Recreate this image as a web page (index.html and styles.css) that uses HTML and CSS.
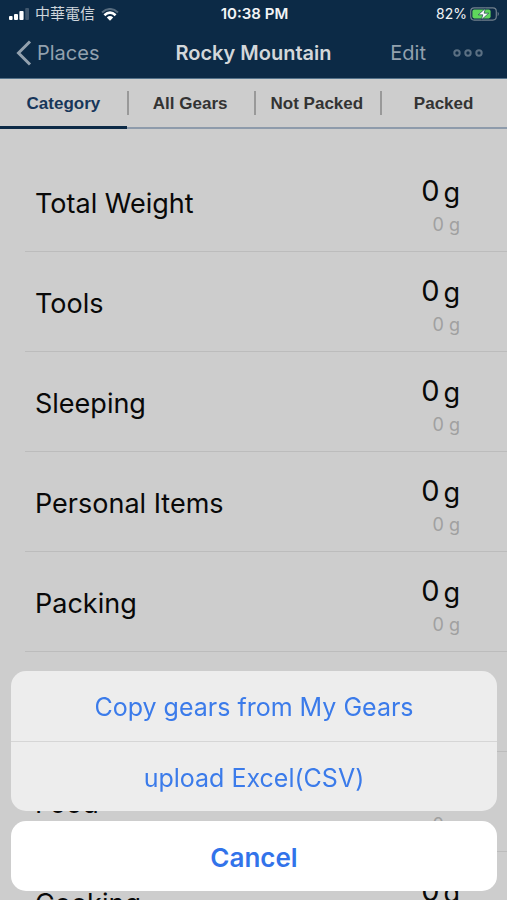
FILE: index.html
```html
<!DOCTYPE html>
<html lang="en">
<head>
<meta charset="utf-8">
<meta name="viewport" content="width=device-width, initial-scale=1">
<title>Rocky Mountain</title>
<link rel="stylesheet" href="styles.css">
</head>
<body>
<div class="app">
  <header class="header">
    <div class="status">
      <div class="status-side">
        <svg class="signal" viewBox="0 0 20 12" aria-hidden="true"><rect x="0" y="8" width="3.6" height="4" rx="1"/><rect x="5" y="6" width="4" height="6" rx="1"/><rect x="10.4" y="3" width="4.2" height="9" rx="1"/><rect x="16.2" y="0" width="3.8" height="12" rx="1" opacity=".22"/></svg>
        <span class="carrier">中華電信</span>
        <svg class="wifi" viewBox="0 0 18 13" aria-hidden="true"><path d="M1 4.5Q9-2.5 17 4.5" opacity=".3"/><path d="M3.4 7.2Q9 2 14.6 7.2" stroke-width="2.6"/><path class="solid" d="M5.8 9.4Q9 6.8 12.2 9.4L9 12.8z"/></svg>
      </div>
      <span class="clock">10:38 PM</span>
      <div class="status-side status-end">
        <span class="percent">82%</span>
        <svg class="battery" viewBox="0 0 30 14" aria-hidden="true"><rect x=".7" y=".9" width="25.6" height="12.2" rx="3.5" fill="none" stroke="#71808d" stroke-width="1.2"/><path d="M27.7 4.8q2.4 2.2 0 4.4z" fill="#71808d"/><rect x="2.4" y="2.6" width="18.2" height="8.8" rx="1.8" fill="#5fd65c"/><path d="M15.4 1.4 8.3 7.8h4.5L11.4 12.8l7.3-6.6h-4.6z" fill="#fff" stroke="#0c2a46" stroke-width=".6"/></svg>
      </div>
    </div>
    <nav class="nav">
      <a class="back" href="#places"><svg class="chevron" viewBox="0 0 16 26" aria-hidden="true"><path d="M14 1.5 2.5 13 14 24.5"/></svg>Places</a>
      <h1 class="title">Rocky Mountain</h1>
      <div class="actions">
        <button class="edit" type="button">Edit</button>
        <button class="more" type="button" aria-label="More"><svg viewBox="0 0 30 8" aria-hidden="true"><circle cx="4" cy="4" r="2.7"/><circle cx="15" cy="4" r="2.7"/><circle cx="26" cy="4" r="2.7"/></svg></button>
      </div>
    </nav>
  </header>
  <div class="tabs">
    <button class="tab active" type="button">Category</button>
    <button class="tab" type="button">All Gears</button>
    <button class="tab" type="button">Not Packed</button>
    <button class="tab" type="button">Packed</button>
  </div>
  <ul class="list">
    <li class="row"><span class="name">Total Weight</span><div class="weights"><div class="main"><span>0</span><span class="unit">g</span></div><div class="sub">0 g</div></div></li>
    <li class="row"><span class="name">Tools</span><div class="weights"><div class="main"><span>0</span><span class="unit">g</span></div><div class="sub">0 g</div></div></li>
    <li class="row"><span class="name">Sleeping</span><div class="weights"><div class="main"><span>0</span><span class="unit">g</span></div><div class="sub">0 g</div></div></li>
    <li class="row"><span class="name">Personal Items</span><div class="weights"><div class="main"><span>0</span><span class="unit">g</span></div><div class="sub">0 g</div></div></li>
    <li class="row"><span class="name">Packing</span><div class="weights"><div class="main"><span>0</span><span class="unit">g</span></div><div class="sub">0 g</div></div></li>
    <li class="row"></li>
    <li class="row"><span class="name">Food</span><div class="weights"><div class="main"><span>0</span><span class="unit">g</span></div><div class="sub">0 g</div></div></li>
    <li class="row"><span class="name">Cooking</span><div class="weights"><div class="main"><span>0</span><span class="unit">g</span></div></div></li>
  </ul>
</div>
<div class="sheet" role="dialog" aria-label="Gear actions">
  <div class="group">
    <button class="option" type="button">Copy gears from My Gears</button>
    <button class="option" type="button">upload Excel(CSV)</button>
  </div>
  <button class="option cancel" type="button">Cancel</button>
</div>
</body>
</html>
```
FILE: styles.css
```css
* {
  box-sizing: border-box;
}

body {
  margin: 0;
  background: #cdcdcd;
  color: #080808;
  font-family: Inter, "Noto Sans CJK TC", sans-serif;
}

button {
  margin: 0;
  padding: 0;
  border: 0;
  background: none;
  font: inherit;
  color: inherit;
}

.app {
  height: 100vh;
  overflow: hidden;
}

.header {
  background: #0c2a46;
  border-bottom: 1px solid #54728a;
}

.status {
  display: grid;
  grid-template-columns: 1fr auto 1fr;
  align-items: center;
  height: 28px;
  padding: 0 7px 0 9px;
  color: #f2f4f6;
  font-size: 15px;
  line-height: 20px;
}

.status-side {
  display: flex;
  align-items: center;
  gap: 6px;
}

.status-end {
  justify-content: flex-end;
  gap: 3px;
}

.signal {
  width: 20px;
  height: 12px;
  fill: #fff;
}

.carrier {
  color: #cfd6dc;
}

.wifi {
  width: 18px;
  height: 13px;
  fill: none;
  stroke: #fff;
  stroke-width: 2;
}

.wifi .solid {
  fill: #fff;
  stroke: none;
}

.clock {
  font-weight: 600;
}

.percent {
  font-size: 14px;
}

.battery {
  width: 30px;
  height: 14px;
}

.nav {
  display: grid;
  grid-template-columns: 1fr auto 1fr;
  align-items: center;
  height: 50px;
  padding: 0 16px;
  color: #93a1ae;
  font-size: 20px;
}

.back {
  display: flex;
  align-items: center;
  gap: 5px;
  color: inherit;
  text-decoration: none;
}

.chevron {
  width: 16px;
  height: 26px;
  fill: none;
  stroke: #93a1ae;
  stroke-width: 3;
}

.title {
  margin: 0;
  color: #d3d7da;
  font-size: 20px;
  font-weight: 600;
}

.actions {
  display: flex;
  align-items: center;
  justify-content: flex-end;
  gap: 27px;
  padding-right: 8px;
}

.more {
  display: flex;
}

.more svg {
  width: 30px;
  height: 8px;
  fill: none;
  stroke: #5b7083;
  stroke-width: 2;
}

.tabs {
  display: grid;
  grid-template-columns: repeat(4, 1fr);
  height: 50px;
  border-bottom: 2px solid #8e9bab;
}

.tab {
  display: flex;
  align-items: center;
  justify-content: center;
  height: 50px;
  padding-top: 2px;
  color: #333;
  font-family: "Liberation Sans", sans-serif;
  font-size: 17px;
  font-weight: 700;
  border-bottom: 3px solid transparent;
}

.tab + .tab {
  background: linear-gradient(#999, #999) left 12px / 2px 24px no-repeat;
}

.tab.active {
  color: #17365a;
  border-bottom-color: #0c2a46;
}

.list {
  margin: 0;
  padding: 23px 0 0 25px;
  list-style: none;
}

.row {
  display: flex;
  align-items: center;
  justify-content: space-between;
  height: 100px;
  padding: 0 47px 0 10px;
  border-bottom: 1px solid #bcbcbc;
}

.name {
  padding-top: 4px;
  font-size: 27px;
}

.weights {
  display: flex;
  flex-direction: column;
  align-items: flex-end;
  align-self: flex-start;
  padding-top: 21px;
}

.main {
  display: flex;
  gap: 4px;
  font-size: 29px;
  line-height: 36px;
}

.unit {
  padding-top: 2px;
  font-size: 27px;
}

.sub {
  color: #a0a0a0;
  font-size: 18px;
  line-height: 28px;
}

.sheet {
  position: fixed;
  right: 10px;
  bottom: 9px;
  left: 11px;
  display: grid;
  gap: 10px;
}

.group {
  overflow: hidden;
  border-radius: 15px;
  background: #ededed;
}

.option {
  display: block;
  width: 100%;
  height: 70px;
  padding-top: 2px;
  color: #3b7bea;
  font-size: 25px;
}

.option + .option {
  border-top: 1px solid #d6d6d6;
}

.cancel {
  border-radius: 15px;
  background: #fff;
  color: #3273ea;
  font-size: 26px;
  font-weight: 600;
}
```
